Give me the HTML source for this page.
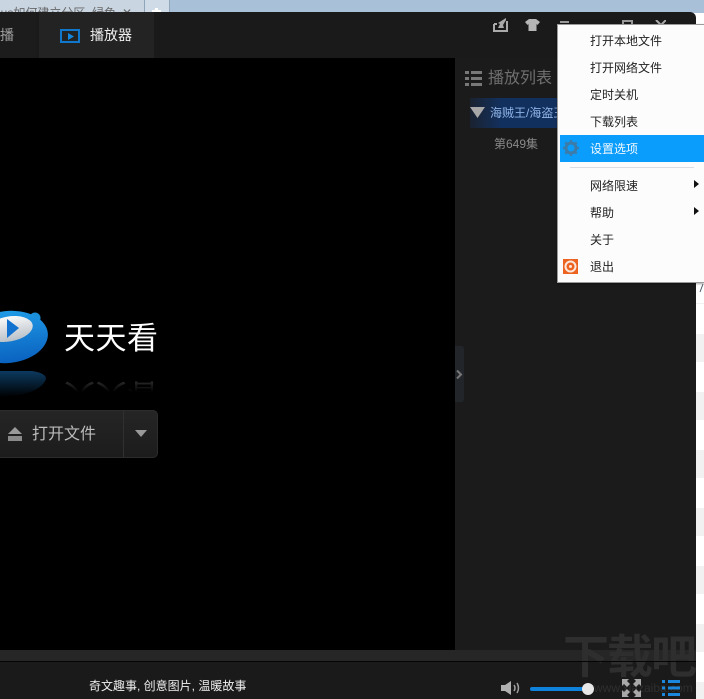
<!DOCTYPE html>
<html><head><meta charset="utf-8">
<style>
html,body{margin:0;padding:0;}
body{width:704px;height:699px;position:relative;overflow:hidden;background:#fff;font-family:"Liberation Sans","Noto Sans CJK SC",sans-serif;}
.a{position:absolute;}
.t{position:absolute;white-space:nowrap;}
.m{position:absolute;left:590px;font-size:12px;line-height:16px;color:#222;white-space:nowrap;}
.band{position:absolute;left:696px;width:8px;height:28px;background:#f1f1f1;}
</style></head>
<body>
<!-- background top browser -->
<div class="a" style="left:0;top:0;width:704px;height:13px;background:#a9c1d8;"></div>
<div class="a" style="left:0;top:0;width:144px;height:13px;background:#c9d6e2;"></div>
<div class="t" style="left:-2px;top:6px;font-size:12px;line-height:14px;color:#666;">ius如何建立分区_绿色</div>
<div class="t" style="left:122px;top:6px;font-size:12px;line-height:14px;color:#666;">✕</div>
<div class="a" style="left:144px;top:0;width:26px;height:13px;background:#cfdbe6;border-left:1px solid #8fa5ba;border-right:1px solid #8fa5ba;box-sizing:border-box;"></div>
<div class="a" style="left:155px;top:8px;width:3px;height:5px;background:#fff;"></div>
<div class="a" style="left:152px;top:10px;width:9px;height:3px;background:#fff;"></div>
<!-- right page -->
<div class="a" style="left:696px;top:303px;width:8px;height:1px;background:#f1f1f1;"></div>
<div class="band" style="top:334px;"></div>
<div class="band" style="top:392px;"></div>
<div class="band" style="top:450px;"></div>
<div class="band" style="top:508px;"></div>
<div class="band" style="top:566px;"></div>
<div class="band" style="top:624px;"></div>
<div class="band" style="top:682px;height:17px;"></div>
<!-- app window -->
<div class="a" style="left:0;top:12px;width:696px;height:687px;background:#1a1a1a;border-top-right-radius:6px;"></div>
<!-- tabs -->
<div class="a" style="left:0;top:12px;width:36px;height:46px;background:#1c1c1c;"></div>
<div class="a" style="left:39px;top:12px;width:115px;height:46px;background:#232323;"></div>
<div class="t" style="left:0;top:26px;font-size:14px;line-height:18px;color:#a0a0a0;">播</div>
<div class="a" style="left:60px;top:29px;width:20px;height:14px;box-sizing:border-box;border:2px solid #0f78cc;"></div>
<svg class="a" style="left:68px;top:33px;" width="6" height="7"><path d="M0 0L6 3.500L0 7Z" fill="#1488e0"/></svg>
<div class="t" style="left:90px;top:26px;font-size:14px;line-height:18px;color:#eee;">播放器</div>
<!-- top icons -->
<svg class="a" style="left:492px;top:17px;" width="16" height="16"><path d="M2 7V14H15V4M2 7H5" fill="none" stroke="#aaa" stroke-width="2"/><path d="M14 1L6 6L8 7L6 11H12L11 8L14 3Z" fill="#aaa"/></svg>
<svg class="a" style="left:525px;top:19px;" width="15" height="12"><path d="M4 0H11L15 3L12.500 6L11.500 5V12H3.500V5L2.500 6L0 3Z" fill="#b5b5b5"/></svg>
<div class="a" style="left:560px;top:21px;width:9px;height:2px;background:#999;"></div>
<div class="a" style="left:622px;top:20px;width:11px;height:4px;border:2px solid #999;border-bottom:0;box-sizing:border-box;"></div>
<svg class="a" style="left:655px;top:20px;" width="11" height="5"><path d="M1 0L6 5L11 0" fill="none" stroke="#aaa" stroke-width="2"/></svg>
<!-- video area -->
<div class="a" style="left:0;top:58px;width:455px;height:592px;background:#000;"></div>
<!-- logo -->
<svg class="a" style="left:0;top:305px;" width="60" height="95">
<defs>
<linearGradient id="g1" x1="0" y1="0" x2="0" y2="1"><stop offset="0" stop-color="#1f9ae6"/><stop offset="1" stop-color="#0a62c0"/></linearGradient>
<linearGradient id="g2" x1="0" y1="0" x2="0" y2="1"><stop offset="0" stop-color="#0c3a60"/><stop offset="1" stop-color="#000"/></linearGradient>
<linearGradient id="g3" x1="0" y1="0" x2="0" y2="1"><stop offset="0" stop-color="#fafafa"/><stop offset="1" stop-color="#b8c0c8"/></linearGradient>
</defs>
<circle cx="35" cy="13" r="5.500" fill="#1b8fd8"/>
<ellipse cx="8" cy="32" rx="40" ry="26" fill="url(#g1)" transform="rotate(-6 8 32)"/>
<ellipse cx="9" cy="24" rx="24" ry="12.500" fill="url(#g3)" transform="rotate(-10 9 24)"/>
<path d="M7 14L19 23L7 33Z" fill="#1272d0"/>
<path d="M0 66H32Q46 68 46 74Q40 90 0 92Z" fill="url(#g2)"/>
</svg>
<div class="t" style="left:64px;top:320px;font-size:31px;line-height:38px;color:#fff;letter-spacing:0.500px;">天天看</div>
<div class="a" style="left:64px;top:377px;width:96px;height:15px;overflow:hidden;-webkit-mask-image:linear-gradient(#000,transparent);mask-image:linear-gradient(#000,transparent);">
<div class="t" style="left:0;top:0;font-size:31px;line-height:34px;color:#3c3c3c;letter-spacing:0.500px;transform:scaleY(-1);">天天看</div>
</div>
<!-- open button -->
<div class="a" style="left:-6px;top:410px;width:164px;height:48px;box-sizing:border-box;background:linear-gradient(#252525,#1c1c1c);border:1px solid #2c2c2c;border-radius:5px;"></div>
<div class="a" style="left:123px;top:411px;width:1px;height:46px;background:#303030;"></div>
<svg class="a" style="left:7px;top:426px;" width="16" height="16"><path d="M8 1L15 8H1Z" fill="#9a9a9a"/><rect x="1" y="10" width="14" height="5" fill="#8a8a8a"/></svg>
<div class="t" style="left:32px;top:424px;font-size:16px;line-height:21px;color:#bbb;">打开文件</div>
<svg class="a" style="left:135px;top:430px;" width="12" height="8"><path d="M0 0H12L6 7Z" fill="#999"/></svg>
<!-- playlist panel -->
<div class="a" style="left:455px;top:58px;width:241px;height:592px;background:#1b1b1b;"></div>
<svg class="a" style="left:465px;top:71px;" width="17" height="16" fill="#787878"><rect x="0" y="0" width="4" height="3"/><rect x="6" y="0" width="11" height="3"/><rect x="0" y="6" width="4" height="3"/><rect x="6" y="6" width="11" height="3"/><rect x="0" y="12" width="4" height="3"/><rect x="6" y="12" width="11" height="3"/></svg>
<div class="t" style="left:488px;top:68px;font-size:16px;line-height:21px;color:#6f6f6f;">播放列表</div>
<div class="a" style="left:470px;top:98px;width:90px;height:30px;background:linear-gradient(90deg,#1a2230,#12305e 35%,#12305e);"></div>
<svg class="a" style="left:470px;top:107px;" width="15" height="11"><path d="M0 0H15L7.500 11Z" fill="#a8a8a8"/></svg>
<div class="t" style="left:490px;top:105px;width:68px;overflow:hidden;font-size:12px;line-height:16px;color:#8fb4e8;">海贼王/海盗王</div>
<div class="t" style="left:494px;top:136px;font-size:12px;line-height:16px;color:#8a8a8a;">第649集</div>
<!-- panel handle -->
<div class="a" style="left:455px;top:346px;width:9px;height:56px;background:#22262b;border-radius:0 3px 3px 0;"></div>
<svg class="a" style="left:456px;top:370px;" width="7" height="9"><path d="M1 0.500L5 4.500L1 8.500" fill="none" stroke="#777" stroke-width="2"/></svg>
<!-- bottom -->
<div class="a" style="left:0;top:650px;width:696px;height:11px;background:#262626;"></div>
<div class="a" style="left:0;top:662px;width:696px;height:37px;background:#1a1a1a;"></div>
<div class="t" style="left:89px;top:678px;font-size:12px;line-height:16px;color:#f0f0f0;">奇文趣事, 创意图片, 温暖故事</div>
<!-- watermark -->
<div class="t" style="left:563px;top:630px;font-size:46px;line-height:54px;font-weight:bold;color:#2e2e2e;letter-spacing:-2px;">下载吧</div>
<div class="a" style="left:0;top:661px;width:696px;height:1px;background:#050505;"></div>
<div class="t" style="left:594px;top:681px;font-size:12px;line-height:15px;color:#2f2f2f;">www.xiazaiba.com</div>
<!-- volume -->
<svg class="a" style="left:500px;top:680px;" width="24" height="16"><path d="M1 5H5L11 1V15L5 11H1Z" fill="#b0b0b0"/><path d="M14 5Q16 8 14 11M17 3Q20 8 17 13" fill="none" stroke="#a0a0a0" stroke-width="1.500"/></svg>
<div class="a" style="left:530px;top:687px;width:56px;height:4px;background:#0f82dc;border-radius:2px;"></div>
<div class="a" style="left:582px;top:683px;width:12px;height:12px;background:#e8e8e8;border-radius:50%;"></div>
<!-- fullscreen -->
<svg class="a" style="left:622px;top:679px;" width="19" height="18" fill="#a8a8a8"><path d="M0 0H7L5 2L8 5L5 8L2 5L0 7Z"/><path d="M19 0H12L14 2L11 5L14 8L17 5L19 7Z"/><path d="M0 18H7L5 16L8 13L5 10L2 13L0 11Z"/><path d="M19 18H12L14 16L11 13L14 10L17 13L19 11Z"/></svg>
<!-- list -->
<svg class="a" style="left:662px;top:680px;" width="18" height="17" fill="#1a86de"><rect x="0" y="0" width="3" height="3"/><rect x="6" y="0" width="12" height="3"/><rect x="0" y="6.500" width="3" height="3"/><rect x="6" y="6.500" width="12" height="3"/><rect x="0" y="13" width="3" height="3"/><rect x="6" y="13" width="12" height="3"/></svg>
<!-- context menu -->
<div class="a" style="left:557px;top:24px;width:147px;height:259px;background:#fcfcfc;border-left:1px solid #9a9a9a;border-top:1px solid #9a9a9a;border-bottom:1px solid #9a9a9a;box-sizing:border-box;box-shadow:0 1px 2px rgba(0,0,0,.35);"></div>
<div class="a" style="left:560px;top:135px;width:144px;height:27px;background:#0b9dfb;"></div>
<div class="a" style="left:570px;top:167px;width:124px;height:1px;background:#dcdce4;"></div>
<div class="m" style="top:33px;">打开本地文件</div>
<div class="m" style="top:60px;">打开网络文件</div>
<div class="m" style="top:87px;">定时关机</div>
<div class="m" style="top:114px;">下载列表</div>
<div class="m" style="top:141px;color:#f2f8ff;">设置选项</div>
<div class="m" style="top:178px;">网络限速</div>
<div class="m" style="top:205px;">帮助</div>
<div class="m" style="top:232px;">关于</div>
<div class="m" style="top:259px;">退出</div>
<svg class="a" style="left:563px;top:140px;" width="16" height="16"><circle cx="8" cy="8" r="5" fill="none" stroke="#3d7ba8" stroke-width="3"/><path d="M8 0V3M8 13V16M0 8H3M13 8H16M2.300 2.300L4.400 4.400M11.600 11.600L13.700 13.700M2.300 13.700L4.400 11.600M11.600 4.400L13.700 2.300" stroke="#3d7ba8" stroke-width="2.200"/></svg>
<svg class="a" style="left:694px;top:180px;" width="5" height="8"><path d="M0 0L5 4L0 8Z" fill="#111"/></svg>
<svg class="a" style="left:694px;top:207px;" width="5" height="8"><path d="M0 0L5 4L0 8Z" fill="#111"/></svg>
<svg class="a" style="left:563px;top:259px;" width="15" height="15"><rect width="15" height="15" fill="#ec6420"/><circle cx="7.500" cy="7.500" r="5" fill="none" stroke="#fbe9df" stroke-width="2"/><circle cx="7.500" cy="7.500" r="1.500" fill="#fbe9df"/></svg>
<svg class="a" style="left:696px;top:283px;" width="8" height="12"><path d="M7 1L4 9" stroke="#456" stroke-width="1" fill="none"/></svg>
</body></html>
